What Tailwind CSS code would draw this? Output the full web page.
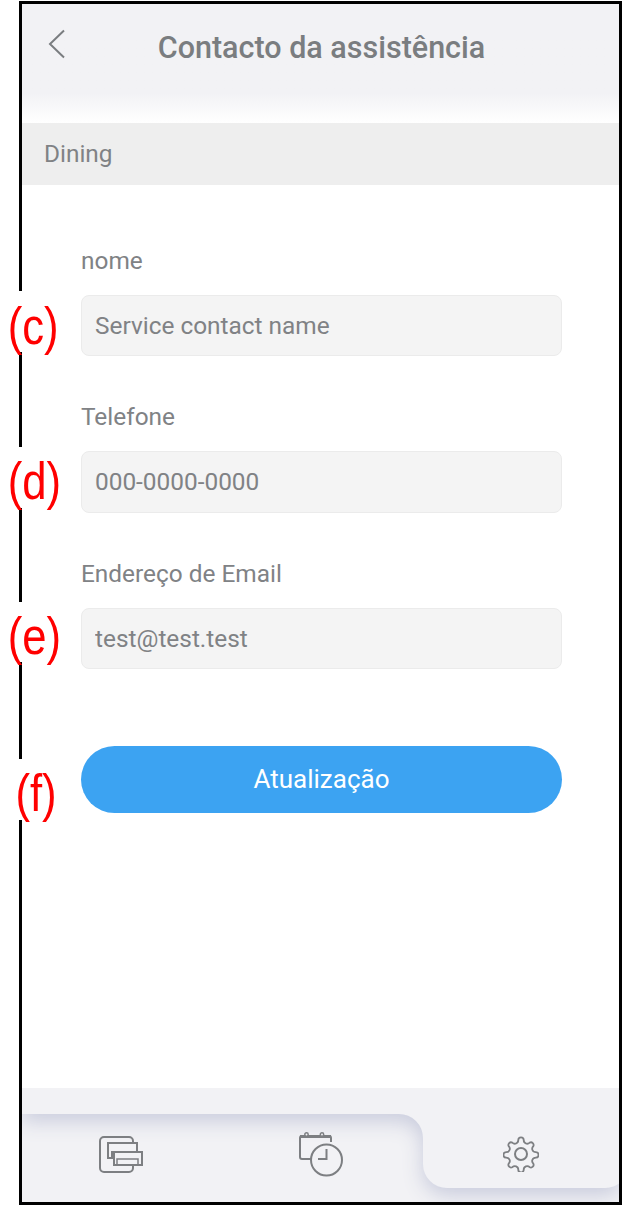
<!DOCTYPE html>
<html lang="pt">
<head>
  <meta charset="UTF-8" />
  <meta name="viewport" content="width=device-width, initial-scale=1.0"/>
  <title>Contacto da assistência</title>
  <script src="https://cdn.jsdelivr.net/npm/@tailwindcss/browser@4"></script>
</head>
<body class="bg-white font-['Roboto',sans-serif]">
  <div class="relative w-[625px] h-[1209px] pt-[1px] pl-[19px] overflow-hidden">
    <div class="w-[603px] h-[1204px] border-[3px] border-black flex flex-col overflow-hidden">
      <!-- Header -->
      <div class="h-[119px] shrink-0 bg-gradient-to-b from-[#f2f2f5] from-75% to-white relative">
        <div class="h-[87px] pl-[2px] flex items-center justify-center text-[30.5px] font-medium text-[#7a7d80]">Contacto da assistência</div>
        <svg class="absolute left-[26px] top-[25px]" width="18" height="30" viewBox="0 0 18 30" fill="none" stroke="#7a7d80" stroke-width="2"><path d="M16 1.5 2 15l14 13.5"/></svg>
      </div>

      <!-- Section -->
      <div class="h-[62px] shrink-0 bg-[#eeeeee] flex items-center pl-[22px] text-[24.4px] text-[#808285]">Dining</div>

      <!-- Form -->
      <div class="flex-1 pl-[59px] pt-[61px]">
        <div class="w-[481px]">
          <label class="block h-[30px] leading-[30px] text-[24.4px] text-[#808285] mb-[19px]">nome</label>
          <input type="text" placeholder="Service contact name" class="block w-full h-[61px] px-[13px] rounded-lg bg-[#f4f4f4] border border-[#ebebeb] text-[24.4px] placeholder:text-[#808285]" />
          <label class="block h-[30px] leading-[30px] text-[24.4px] text-[#808285] mt-[46px] mb-[19px]">Telefone</label>
          <input type="text" placeholder="000-0000-0000" class="block w-full h-[62px] px-[13px] pb-[2px] rounded-lg bg-[#f4f4f4] border border-[#ebebeb] text-[24.4px] placeholder:text-[#808285]" />
          <label class="block h-[30px] leading-[30px] text-[24.4px] text-[#808285] mt-[46px] mb-[19px]">Endereço de Email</label>
          <input type="text" placeholder="test@test.test" class="block w-full h-[61px] px-[13px] rounded-lg bg-[#f4f4f4] border border-[#ebebeb] text-[24.4px] placeholder:text-[#808285]" />
          <button class="block w-full h-[67px] mt-[77px] rounded-full bg-[#3ca3f2] text-white text-[26px]">Atualização</button>
        </div>
      </div>

      <!-- Bottom nav -->
      <div class="relative h-[114px] shrink-0 bg-[#f2f2f5] overflow-hidden">
        <svg class="absolute left-0 top-0 drop-shadow-[0_7px_10px_#c8cbdc]" width="597" height="114" viewBox="0 0 597 114">
          <path d="M-10 -10H607V76a24 24 0 0 1-24 24H425a24 24 0 0 1-24-24V50a24 24 0 0 0-24-24H-10z" fill="#f2f2f5"/>
        </svg>
        <div class="relative grid grid-cols-3 h-full">
          <div class="flex items-center justify-center pt-[18px]">
            <svg width="46" height="38" viewBox="1 0 46 38" fill="none" stroke="#7d7f82" stroke-width="2"><path d="M35 7V6a4 4 0 0 0-4-4H6a4 4 0 0 0-4 4v27a4 4 0 0 0 4 4h25a4 4 0 0 0 4-4v-3" /><path d="M16 23H10V8h29v9"/><path d="M14 23v-6h25"/><path d="M16 30v-13h28v13z"/><path d="M19 30v-6h21v6" stroke-width="1.5"/></svg>
          </div>
          <div class="flex items-center justify-center pt-[18px]">
            <svg width="46" height="46" viewBox="0 0 46 46" fill="none" stroke="#7d7f82" stroke-width="2"><path d="M14 28H4a2 2 0 0 1-2-2V7a2 2 0 0 1 2-2h27a2 2 0 0 1 2 2v4" /><path d="M2 5.5h31" stroke-width="3"/><circle cx="8.5" cy="3.500" r="1.7" fill="#f2f2f5" stroke-width="1.5"/><circle cx="24" cy="3.500" r="1.7" fill="#f2f2f5" stroke-width="1.5"/><circle cx="28.5" cy="29" r="15.5" fill="#f2f2f5"/><path d="M28.5 18v10H20"/></svg>
          </div>
          <div class="flex items-center justify-center pt-[17px] pl-[2px]">
            <svg width="36" height="36" viewBox="0 0 36 36" fill="none" stroke="#7d7f82" stroke-width="2" stroke-linejoin="round"><path d="M15 2.5a3 3 0 0 1 6 0c0 2.2.9 3.2 2.4 3.8 1.5.6 2.8.5 4.3-1a3 3 0 0 1 4 4c-1.500 1.500-1.600 2.800-1 4.300.6 1.500 1.600 2.400 3.800 2.400a3 3 0 0 1 0 6c-2.200 0-3.200.9-3.800 2.400-.6 1.500-.5 2.800 1 4.300a3 3 0 0 1-4 4c-1.500-1.500-2.800-1.600-4.300-1-1.500.6-2.400 1.600-2.400 3.800a3 3 0 0 1-6 0c0-2.200-.9-3.200-2.400-3.800-1.500-.6-2.800-.5-4.300 1a3 3 0 0 1-4-4c1.500-1.500 1.600-2.800 1-4.300-.6-1.500-1.600-2.400-3.800-2.400a3 3 0 0 1 0-6c2.200 0 3.200-.9 3.800-2.400.6-1.500.5-2.800-1-4.300a3 3 0 0 1 4-4c1.500 1.500 2.800 1.600 4.300 1 1.500-.6 2.400-1.600 2.400-3.800z" transform="translate(1.800 1.800) scale(.9)"/><circle cx="18" cy="18" r="6"/></svg>
          </div>
        </div>
      </div>
    </div>

    <!-- Red callouts over the frame -->
    <div class="absolute left-[3px] top-[291px] w-[58px] h-[61px] bg-white text-center text-[#ff0000] font-['Liberation_Sans',sans-serif] text-[52px] leading-[70px] scale-x-[0.84]">(c)</div>
    <div class="absolute left-[3px] top-[447px] w-[58px] h-[61px] bg-white text-center text-[#ff0000] font-['Liberation_Sans',sans-serif] text-[52px] leading-[68px] scale-x-[0.84]">(d)</div>
    <div class="absolute left-[3px] top-[602px] w-[58px] h-[60px] bg-white text-center text-[#ff0000] font-['Liberation_Sans',sans-serif] text-[52px] leading-[68px] scale-x-[0.84]">(e)</div>
    <div class="absolute left-[7px] top-[759px] w-[58px] h-[61px] bg-white text-center text-[#ff0000] font-['Liberation_Sans',sans-serif] text-[52px] leading-[68px] scale-x-[0.84]">(f)</div>
  </div>
</body>
</html>
